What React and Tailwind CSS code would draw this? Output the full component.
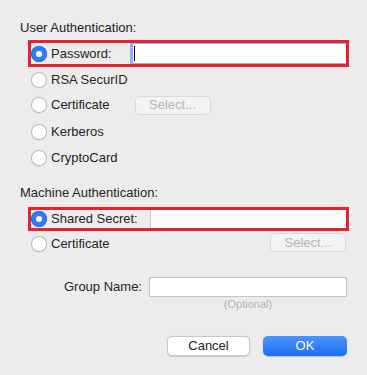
import React from "react";

const Radio = ({ checked }) => (
  <span
    className={`flex h-4 w-4 shrink-0 items-center justify-center rounded-full ${
      checked
        ? "bg-[#2f7df6] shadow-[inset_0_0_0_1px_#2a6fe0]"
        : "bg-white shadow-[inset_0_0_0_1px_#b9b9b9,0_0.5px_1px_rgba(0,0,0,0.1)]"
    }`}
  >
    {checked && <span className="h-[6px] w-[6px] rounded-full bg-white" />}
  </span>
);

const SelectButton = ({ className = "" }) => (
  <div
    className={`flex h-[19px] w-[76px] items-center justify-center rounded-[4px] border border-[#dadada] bg-[#f3f3f3] text-[#b6b6b6] ${className}`}
  >
    Select...
  </div>
);

const RadioRow = ({ label, height, children }) => (
  <div className={`ml-[11px] flex items-center ${height}`}>
    <div className="flex items-center gap-[4px]">
      <Radio />
      <span>{label}</span>
    </div>
    {children}
  </div>
);

export default function App() {
  return (
    <div className="h-[375px] w-[367px] overflow-hidden bg-[#ececec] pl-5 pr-[18px] pt-5 font-['Liberation_Sans',Arial,sans-serif] text-[13px] text-[#242424]">
      {/* User Authentication */}
      <div className="h-4 leading-4">User Authentication:</div>

      <div className="ml-2 mt-1 flex h-[27px] border-[3px] border-[#e5222e]">
        <div className="flex w-[99px] items-center gap-[4px]">
          <Radio checked />
          <span>Password:</span>
        </div>
        <div className="flex flex-1 items-center border-y border-l-[3px] border-[#8db2f3] bg-white">
          <span className="ml-px h-[15px] w-px bg-black" />
        </div>
      </div>

      <RadioRow label="RSA SecurID" height="h-[25px]" />
      <RadioRow label="Certificate" height="h-[26px]">
        <SelectButton className="ml-[25px]" />
      </RadioRow>
      <RadioRow label="Kerberos" height="h-[27px]" />
      <RadioRow label="CryptoCard" height="h-[25px]" />

      {/* Machine Authentication */}
      <div className="mt-[15px] h-4 leading-4">Machine Authentication:</div>

      <div className="ml-2 mt-[6px] flex h-[24px] border-[3px] border-[#e5222e]">
        <div className="flex w-[119px] items-center gap-[4px]">
          <Radio checked />
          <span>Shared Secret:</span>
        </div>
        <div className="flex-1 border-l border-[#c6c6c6] bg-white" />
      </div>

      <div className="ml-[11px] flex h-[26px] items-start justify-between">
        <div className="flex h-full items-center gap-[4px]">
          <Radio />
          <span>Certificate</span>
        </div>
        <SelectButton className="mr-[3px] mt-[2px]" />
      </div>

      {/* Group name */}
      <div className="mt-5 flex h-5 items-center justify-end pr-[2px]">
        <span className="mr-[7px]">Group Name:</span>
        <div className="h-5 w-[198px] border border-[#c4c4c4] bg-white" />
      </div>
      <div className="mt-px flex justify-end pr-[2px]">
        <div className="w-[198px] text-center text-[11px] leading-[13px] text-[#b3b3b3]">
          (Optional)
        </div>
      </div>

      {/* Buttons */}
      <div className="mt-[25px] flex justify-end gap-[13px] pr-[2px]">
        <div className="flex h-5 w-[83px] items-center justify-center rounded-[5px] border border-[#c8c8c8] bg-white shadow-[0_0.5px_1px_rgba(0,0,0,0.15)]">
          Cancel
        </div>
        <div className="flex h-5 w-[84px] items-center justify-center rounded-[5px] bg-gradient-to-b from-[#4a95f9] to-[#1b6cf0] text-white shadow-[0_0.5px_1px_rgba(0,0,0,0.2)]">
          OK
        </div>
      </div>
    </div>
  );
}
